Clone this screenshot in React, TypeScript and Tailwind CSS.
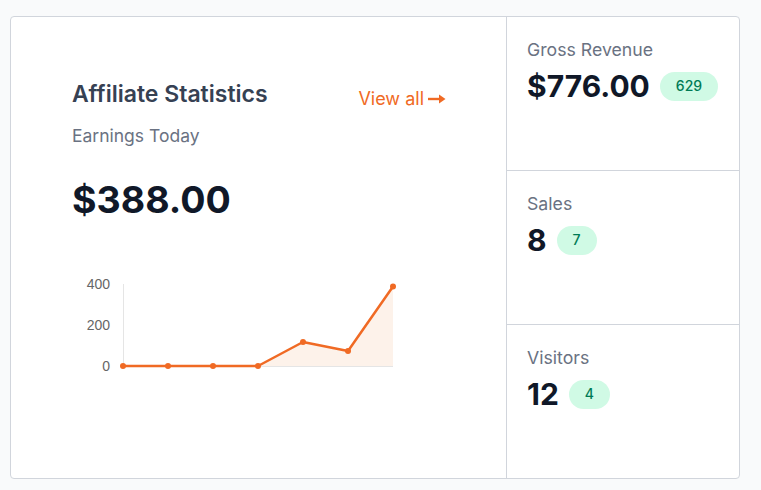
import React from "react";

const points = [0, 0, 0, 0, 117, 73, 388];

function EarningsChart() {
    // plot area: x from 51, step 45; y zero at 96, 400 at 14
    const toY = (v: number) => 96 - (v * 82) / 400;
    const coords = points.map((v, i) => [51 + i * 45, toY(v)] as const);
    const line = coords.map(([x, y]) => `${x},${y}`).join(" ");
    const area = `51,96 ${line} 321,96`;

    return (
        <svg width="340" height="110" viewBox="0 0 340 110" className="mt-[50px] block">
            <line x1="51.5" y1="14" x2="51.5" y2="96" stroke="#e5e5e5" strokeWidth="1" />
            <line x1="51" y1="96.5" x2="321" y2="96.5" stroke="#e5e5e5" strokeWidth="1" />
            {[
                ["400", 14],
                ["200", 55],
                ["0", 96],
            ].map(([label, y]) => (
                <text
                    key={label}
                    x="38"
                    y={Number(y) + 5}
                    textAnchor="end"
                    fontSize="14"
                    fill="#666666"
                    fontFamily="'Liberation Sans', Arial, sans-serif"
                >
                    {label}
                </text>
            ))}
            <polygon points={area} fill="#fdf2ea" />
            <polyline points={line} fill="none" stroke="#f06a24" strokeWidth="2.5" strokeLinejoin="round" />
            {coords.map(([x, y], i) => (
                <circle key={i} cx={x} cy={y} r="3" fill="#f06a24" />
            ))}
        </svg>
    );
}

function StatBox({ label, value, badge, last }: { label: string; value: string; badge: string; last?: boolean }) {
    return (
        <div className={`flex-1 px-5 pt-[21px] ${last ? "" : "border-b border-gray-300"}`}>
            <p className="text-[17.7px] leading-6 text-gray-500">{label}</p>
            <div className="mt-[6px] flex items-center gap-[10px]">
                <span className="text-3xl font-bold text-gray-900">{value}</span>
                <span className="flex h-[29px] items-center rounded-full bg-emerald-100 px-4 text-sm font-medium text-emerald-700">
                    {badge}
                </span>
            </div>
        </div>
    );
}

export default function App() {
    return (
        <div className="min-h-[490px] bg-gray-50 pt-4 pl-[10px] font-['Inter',sans-serif]">
            <div className="flex h-[463px] w-[730px] rounded border border-gray-300 bg-white">
                <div className="flex-1 border-r border-gray-300 pt-[63px] pr-[60px] pl-[61px]">
                    <div className="flex items-start justify-between">
                        <h2 className="text-[23px] leading-7 font-semibold text-gray-700">Affiliate Statistics</h2>
                        <a className="mt-[7px] flex items-center gap-1 text-lg leading-6 text-[#f06a24]">
                            View all
                            <svg width="18" height="10" viewBox="0 0 18 10">
                                <path d="M0 5h13" stroke="#f06a24" strokeWidth="2.4" />
                                <path d="M11 0.5l6.5 4.5-6.5 4.5z" fill="#f06a24" />
                            </svg>
                        </a>
                    </div>
                    <p className="mt-[13px] text-[17.5px] leading-6 text-gray-500">Earnings Today</p>
                    <p className="mt-[32px] text-[37.5px] leading-10 font-bold text-gray-900">$388.00</p>
                    <EarningsChart />
                </div>
                <div className="flex w-[232px] flex-col">
                    <StatBox label="Gross Revenue" value="$776.00" badge="629" />
                    <StatBox label="Sales" value="8" badge="7" />
                    <StatBox label="Visitors" value="12" badge="4" last />
                </div>
            </div>
        </div>
    );
}
